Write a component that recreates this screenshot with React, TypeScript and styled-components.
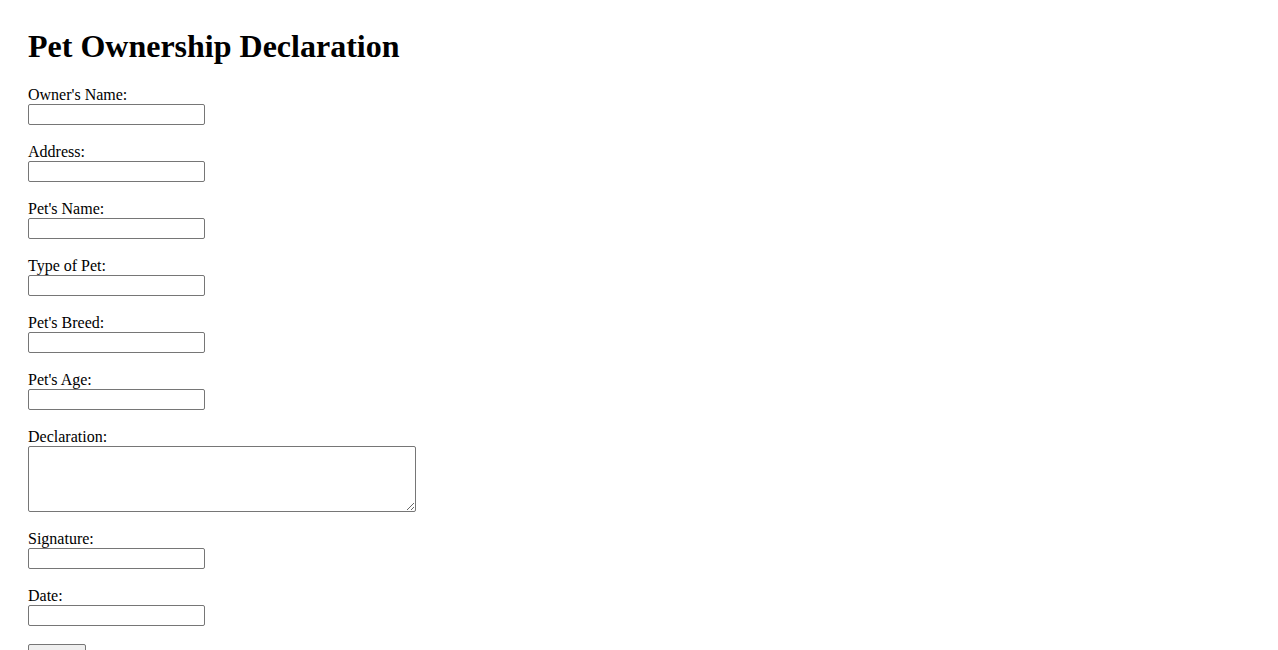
import React from "react";
import styled, { createGlobalStyle } from "styled-components";

const Global = createGlobalStyle`
  html, body { background: #ffffff; }
  body {
    margin: 0;
    padding: 28px;
    font-family: "Liberation Serif", "Times New Roman", serif;
    font-size: 16px;
    color: #000000;
  }
`;

const Title = styled.h1`
  margin: 0 0 21px 0;
  font-size: 32px;
  font-weight: bold;
  line-height: normal;
`;

const Form = styled.form`
  display: flex;
  flex-direction: column;
  align-items: flex-start;
`;

const Field = styled.div`
  display: flex;
  flex-direction: column;
  align-items: flex-start;
  margin-bottom: 18px;
`;

const Label = styled.label`
  display: block;
  line-height: 18px;
`;

const TextInput = styled.input`
  box-sizing: border-box;
  width: 177px;
  height: 21px;
  margin: 0;
  padding: 1px 2px;
  border: 1px solid #767676;
  border-radius: 2px;
  background: #ffffff;
  font-family: Arial, "Liberation Sans", sans-serif;
  font-size: 13.33px;
`;

const TextArea = styled.textarea`
  box-sizing: border-box;
  width: 388px;
  height: 66px;
  margin: 0;
  padding: 2px;
  border: 1px solid #767676;
  border-radius: 2px;
  background: #ffffff;
  font-family: "Liberation Mono", monospace;
  font-size: 13.33px;
`;

const SubmitButton = styled.button`
  box-sizing: border-box;
  width: 58px;
  height: 21px;
  padding: 1px 6px;
  border: 1px solid #767676;
  border-radius: 2px;
  background: #efefef;
  font-family: Arial, "Liberation Sans", sans-serif;
  font-size: 13.33px;
  color: #000000;
`;

const fields = [
  "Owner's Name:",
  "Address:",
  "Pet's Name:",
  "Type of Pet:",
  "Pet's Breed:",
  "Pet's Age:",
];

export default function App() {
  return (
    <>
      <Global />
      <Title>Pet Ownership Declaration</Title>
      <Form onSubmit={(e) => e.preventDefault()}>
        {fields.map((f, i) => (
          <Field key={f}>
            <Label htmlFor={`f${i}`}>{f}</Label>
            <TextInput id={`f${i}`} type="text" />
          </Field>
        ))}
        <Field>
          <Label htmlFor="decl">Declaration:</Label>
          <TextArea id="decl" />
        </Field>
        <Field>
          <Label htmlFor="sig">Signature:</Label>
          <TextInput id="sig" type="text" />
        </Field>
        <Field>
          <Label htmlFor="date">Date:</Label>
          <TextInput id="date" type="text" />
        </Field>
        <SubmitButton type="submit">Submit</SubmitButton>
      </Form>
    </>
  );
}
